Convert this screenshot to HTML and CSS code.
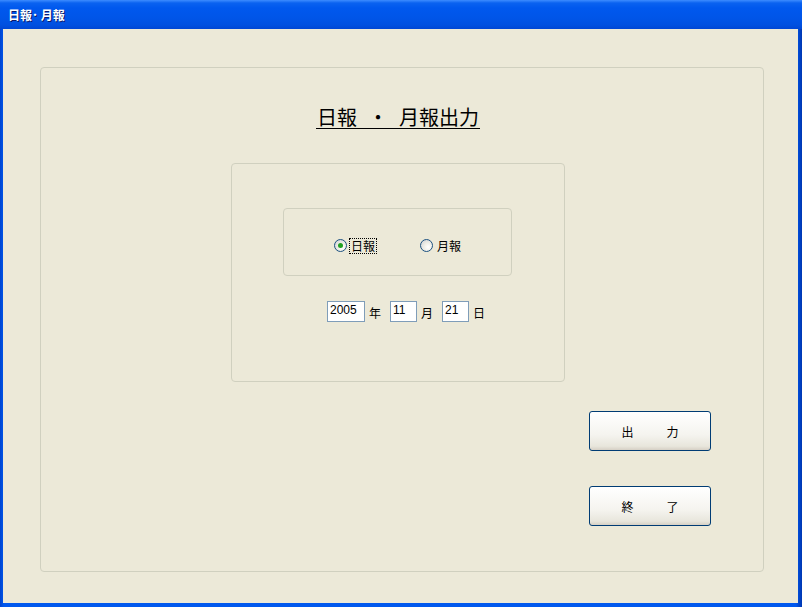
FILE: index.html
```html
<!DOCTYPE html>
<html>
<head>
<meta charset="utf-8" />
<title>日報・月報</title>
<link rel="stylesheet" href="styles.css">
</head>
<body>
<div class="window">
  <div class="title-bar">日報･ 月報</div>
  <div class="client">
    <div class="group-main">
      <div class="head"><span class="head-text">日報<span class="head-dot">・</span>月報出力</span></div>
      <div class="group-date">
        <div class="group-kind">
          <label class="radio checked"><span class="radio-mark"></span><span class="radio-text focus">日報</span></label>
          <label class="radio"><span class="radio-mark"></span><span class="radio-text">月報</span></label>
        </div>
        <div class="date-row">
          <input type="text" class="box box-year" value="2005" /><span class="unit">年</span>
          <input type="text" class="box" value="11" /><span class="unit">月</span>
          <input type="text" class="box" value="21" /><span class="unit">日</span>
        </div>
      </div>
      <div class="buttons">
        <button class="btn">出　　力</button>
        <button class="btn">終　　了</button>
      </div>
    </div>
  </div>
</div>
</body>
</html>
```

FILE: styles.css
```css
*{margin:0; padding:0; box-sizing:border-box;}
body{
	font-family:"Noto Sans CJK JP","Liberation Sans",sans-serif;
	font-size:12px;
	color:#000;
	background:#0054e3;
}
.window{
	width:802px;
	height:607px;
	display:flex;
	flex-direction:column;
	background:linear-gradient(90deg,#0044d0 0,#0058ee 4px,#0058ee 796px,#0036b0 802px);
}
.title-bar{
	height:29px;
	line-height:29px;
	padding-left:8px;
	color:#fff;
	font-weight:bold;
	font-size:12px;
	text-shadow:1px 1px 0 #0a1a6a;
	background:linear-gradient(#3d8cff 0,#0a62f0 3px,#0058ee 8px,#0055e8 18px,#0050e0 25px,#0046d4 29px);
}
.client{
	flex:1;
	margin:0 4px 4px 3px;
	background:#ece9d8;
	padding:38px 0 0 37px;
}
/* group boxes */
.group-main,.group-date,.group-kind{
	border:1px solid #d0d0bf;
	border-radius:4px;
}
.group-main{
	width:724px;
	height:505px;
	display:flex;
	flex-direction:column;
}
.head{
	margin-top:38px;
	padding-left:275px;
	height:23px;
}
.head-text{
	display:inline-block;
	font-size:20px;
	line-height:22px;
	border-bottom:1px solid #000;
	padding:0 1px;
}
.head-dot{
	margin:0 11px;
}
.group-date{
	width:334px;
	height:219px;
	margin:34px 0 0 190px;
}
.group-kind{
	width:229px;
	height:68px;
	margin:44px 0 0 51px;
	display:flex;
	align-items:center;
	padding:7px 0 0 50px;
	gap:44px;
}
.radio{
	display:flex;
	align-items:center;
	gap:3px;
}
.radio-mark{
	width:13px;
	height:13px;
	border-radius:50%;
	border:1px solid #1c5180;
	background:radial-gradient(circle at 65% 65%,#fff 0,#f0efe8 40%,#c9ccd2 100%);
	display:flex;
	align-items:center;
	justify-content:center;
}
.checked .radio-mark::after{
	content:"";
	width:5px;
	height:5px;
	border-radius:50%;
	background:#21a121;
}
.radio-text{
	line-height:14px;
	padding:0 1px;
}
.focus{
	outline:1px dotted #000;
}
.date-row{
	display:flex;
	align-items:center;
	margin:25px 0 0 95px;
	height:21px;
}
.box{
	width:27px;
	height:21px;
	border:1px solid #7f9db9;
	background:#fff;
	font-family:"Liberation Sans",sans-serif;
	font-size:12px;
	padding:0 0 4px 2px;
}
.box-year{
	width:38px;
}
.unit{
	margin:0 9px 0 4px;
	padding-top:1px;
}
.buttons{
	display:flex;
	flex-direction:column;
	align-items:flex-end;
	gap:35px;
	margin-top:29px;
	padding-right:52px;
}
.btn{
	width:122px;
	height:40px;
	border:1px solid #003c74;
	border-radius:3px;
	background:linear-gradient(#fff 0,#f5f4ef 60%,#e8e6dc 90%,#d6d0c5 100%);
	font-family:"Noto Sans CJK JP",sans-serif;
	font-size:12px;
	letter-spacing:3px;
	padding-left:3px;
	color:#000;
}
```
